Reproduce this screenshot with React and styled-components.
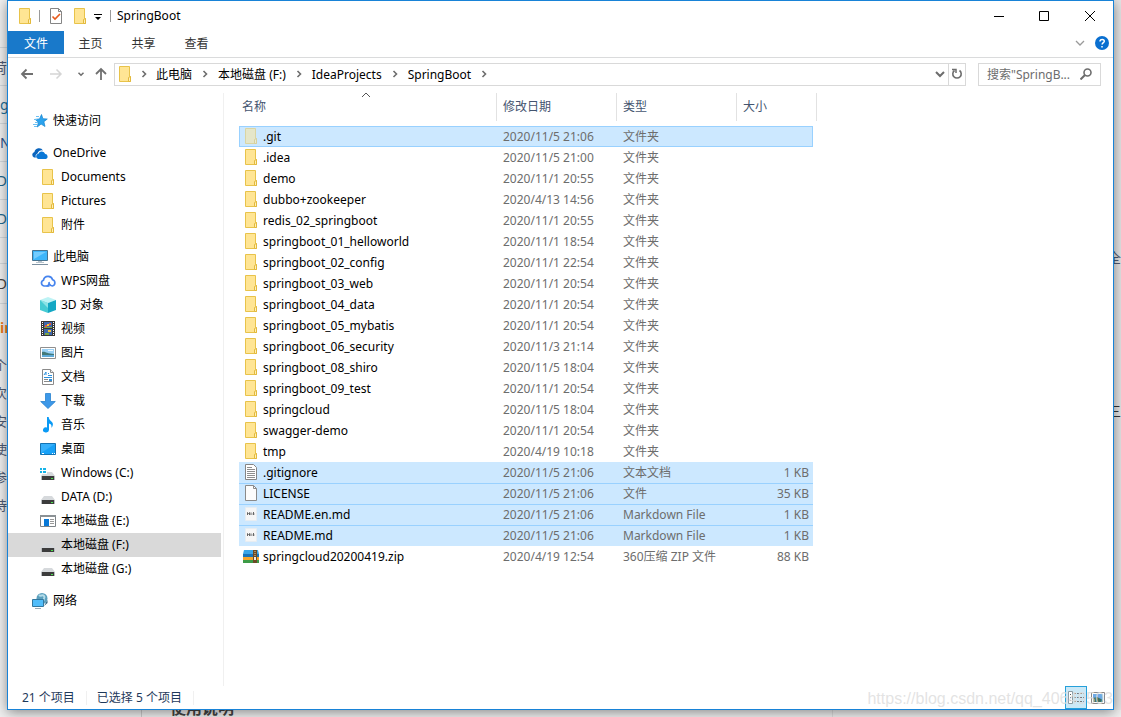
import React, { useState } from "react";
import styled, { createGlobalStyle } from "styled-components";

const GlobalStyle = createGlobalStyle`
  * {
    box-sizing: border-box;
  }

  body {
    margin: 0;
    font-family: "Noto Sans", "Noto Sans CJK SC", sans-serif;
    font-size: 12px;
    color: #000;
  }

  button, input {
    font: inherit;
    color: inherit;
    border: 0;
    padding: 0;
    background: none;
  }

  svg {
    display: block;
    flex: none;
  }
`;

const Desktop = styled.div`
  display: grid;
  grid-template-columns: 7px minmax(0, 1fr) 7px;
  grid-template-rows: minmax(0, 1fr) 7px;
  height: 100vh;
  overflow: hidden;
  background: #f4f4f4;
`;

const SideStrip = styled.div`
  display: flex;
  flex-direction: column;
  overflow: hidden;
  padding-top: 9px;
  background: ${props => props.$side === "right" ? "#e6e6e6" : "#f2f2f2"};
`;

const StripRow = styled.div`
  display: flex;
  flex: none;
  align-items: center;
  justify-content: ${props => props.$start ? "flex-start" : "flex-end"};
  height: ${props => props.$height}px;
  overflow: hidden;
  border-top: 1px solid ${props => props.$line ? "#d5dade" : "transparent"};
  color: ${props => props.$color || "#4f5b73"};
  font-size: ${props => props.$size || 14}px;
  font-weight: ${props => props.$bold ? 700 : 400};
  white-space: nowrap;
`;

const BottomStrip = styled.div`
  grid-column: 1 / -1;
  display: flex;
  align-items: flex-end;
  overflow: hidden;
  padding-left: 141px;
  background: #efefef;
`;

const PageHeading = styled.div`
  height: 7px;
  padding-left: 28px;
  border-left: 1px solid #ccc;
  border-right: 1px solid #ddd;
  flex: 0 0 692px;
  display: flex;
  align-items: flex-end;
  font-size: 16px;
  font-weight: 700;
  color: #444;
  line-height: 18px;
`;

const Window = styled.main`
  position: relative;
  display: flex;
  flex-direction: column;
  border: 1px solid #1883d7;
  background: #fff;
  box-shadow: 0 2px 12px rgba(0, 0, 0, 0.45);
`;

const TitleBar = styled.header`
  display: flex;
  align-items: center;
  flex: none;
  height: 30px;
  padding-left: 9px;
`;

const QuickAccess = styled.div`
  display: flex;
  align-items: center;
  gap: 8px;
`;

const Separator = styled.span`
  width: 1px;
  height: 12px;
  background: #9a9a9a;
`;

const Title = styled.h1`
  flex: 1;
  margin: 0 0 0 6px;
  padding-bottom: 2px;
  font-size: 12px;
  font-weight: 400;
`;

const IconButton = styled.button`
  display: flex;
  align-items: center;
  justify-content: center;
  flex: none;
  width: ${props => props.$width || 16}px;
  height: ${props => props.$height || 20}px;
`;

const Ribbon = styled.nav`
  display: flex;
  align-items: center;
  flex: none;
  height: 27px;
  padding-right: 3px;
  padding-bottom: 3px;
  border-bottom: 1px solid #dadbdc;
`;

const Tab = styled.button`
  width: ${props => props.$active ? 56 : 53}px;
  height: 23px;
  background: ${props => props.$active ? "#1979ca" : "transparent"};
  color: ${props => props.$active ? "#fff" : "#333"};
`;

const Spacer = styled.span`
  flex: 1;
`;

const AddressRow = styled.div`
  display: flex;
  align-items: center;
  flex: none;
  height: 33px;
  padding: 0 12px 1px 0;
`;

const Arrows = styled.div`
  display: flex;
  align-items: center;
  width: 106px;
  padding-left: 8px;
`;

const AddressBox = styled.div`
  display: flex;
  align-items: center;
  flex: 1;
  min-width: 0;
  height: 23px;
  padding-left: 2px;
  border: 1px solid #d9d9d9;
`;

const Crumbs = styled.div`
  display: flex;
  align-items: center;
  flex: 1;
  min-width: 0;
`;

const Refresh = styled(IconButton)`
  border-left: 1px solid #d9d9d9;
`;

const Search = styled.label`
  display: flex;
  align-items: center;
  flex: none;
  width: 123px;
  height: 23px;
  margin-left: 12px;
  padding: 0 8px;
  border: 1px solid #d9d9d9;
  color: #6d6d6d;
`;

const SearchInput = styled.input`
  flex: 1;
  min-width: 0;
  outline: 0;

  &::placeholder {
    color: #6d6d6d;
    opacity: 1;
  }
`;

const Body = styled.div`
  display: flex;
  flex: 1;
  min-height: 0;
  padding-top: 1px;
`;

const Sidebar = styled.nav`
  flex: none;
  width: 216px;
  padding: 8px 2px 0 0;
  margin-top: 1px;
  border-right: 1px solid #f0f0f0;
`;

const Group = styled.div`
  padding-top: 8px;
`;

const NavItem = styled.a`
  display: flex;
  align-items: center;
  gap: 5px;
  height: 24px;
  padding-left: ${props => props.$nested ? 32 : 24}px;
  background: ${props => props.$active ? "#d9d9d9" : "transparent"};
  color: #000;
  text-decoration: none;
  white-space: nowrap;
`;

const NavLabel = styled.span`
  padding-bottom: 2px;
`;

const Files = styled.section`
  flex: 1;
  min-width: 0;
  overflow: hidden;
  padding: 1px 0 0 15px;
`;

const Table = styled.table`
  width: 578px;
  table-layout: fixed;
  border-collapse: separate;
  border-spacing: 0;
`;

const HeadCell = styled.th`
  height: 28px;
  padding: 0 0 0 ${props => props.$first ? 3 : 6}px;
  border-right: 1px solid #e2e2e2;
  color: #44546f;
  font-weight: 400;
  text-align: left;
`;

const HeadLabel = styled.div`
  display: flex;
  align-items: center;
  height: 28px;
  padding-bottom: 2px;
`;

const SortMark = styled.span`
  position: absolute;
  top: 88px;
  left: 352px;
`;

const HeadGap = styled.td`
  height: 5px;
  padding: 0;
`;

const Cell = styled.td`
  height: 21px;
  padding: 0 4px 0 6px;
  border-top: ${props => props.$ruled ? "1px solid #99d1ff" : "0"};
  background: ${props => props.$selected ? "#cce8ff" : "transparent"};
  color: ${props => props.$name ? "#000" : "#6d6d6d"};
  text-align: ${props => props.$right ? "right" : "left"};
  line-height: 20px;
  white-space: nowrap;

  ${props => props.$focused && `
    box-shadow: inset 0 1px #99d1ff, inset 0 -1px #99d1ff
      ${props.$name ? ", inset 1px 0 #99d1ff" : ""}
      ${props.$right ? ", inset -1px 0 #99d1ff" : ""};
  `}
`;

const FileName = styled.div`
  display: flex;
  align-items: center;
  gap: 4px;
  height: 20px;
  margin-left: -2px;

  svg {
    margin-bottom: 2px;
  }
`;

const StatusBar = styled.footer`
  display: flex;
  align-items: center;
  flex: none;
  height: 23px;
  padding: 0 4px 0 14px;
  color: #1e395b;
`;

const StatusText = styled.span`
  padding-right: 11px;
  margin-right: 10px;
  border-right: 1px solid #f0f0f0;
  line-height: 14px;
`;

const ViewButton = styled(IconButton)`
  border: 1px solid ${props => props.$active ? "#26a0da" : "transparent"};
  background: ${props => props.$active ? "#cbe8f6" : "transparent"};
`;

const Watermark = styled.div`
  position: absolute;
  right: 0;
  bottom: 0;
  font-family: "Liberation Sans", sans-serif;
  font-size: 16px;
  line-height: 20px;
  color: rgba(220, 220, 220, 0.8);
  pointer-events: none;
`;

function Icon({ children, width = 16, height = 16 }) {
  return (
    <svg width={width} height={height} viewBox={`0 0 ${width} ${height}`} aria-hidden="true">
      {children}
    </svg>
  );
}

function Chevron({ dir = "right", color = "#6d6d6d", thick = 1.6, size = 3 }) {
  const turns = { right: 0, down: 90, left: 180, up: 270 };
  return (
    <Icon width={12} height={12}>
      <path
        d={`M${6 - size / 2} ${6 - size}l${size} ${size}l-${size} ${size}`}
        transform={`rotate(${turns[dir]} 6 6)`}
        fill="none"
        stroke={color}
        strokeWidth={thick}
      />
    </Icon>
  );
}

function FolderShape({ faded }) {
  return (
    <g opacity={faded ? 0.5 : 1}>
      <path d="M2.5.5h10v10h1v5h-11z" fill="#ffe594" stroke="#e8c34a" />
      <path d="M11.5 15.5v-4l2-1v5z" fill="#fff0b8" stroke="#e3b93c" />
    </g>
  );
}

function DriveShape() {
  return (
    <g>
      <path d="M4 7h8l3 4H1z" fill="#d6d9dc" />
      <path d="M1 11h14v4H1z" fill="#b9bdc0" />
      <path d="M2 11h12v4H2z" fill="#3c3c3c" />
      <path d="M11 13h2v1h-2z" fill="#4be04b" />
    </g>
  );
}

const shapes = {
  folder: <FolderShape />,
  hidden: <FolderShape faded />,
  star: (
    <g>
      <path d="M9.5 1.5l1.4 4.2 4.4.3-3.4 2.7 1.1 4.8-3.9-2.4L5.2 14l1.2-4.8L3.2 6.4l4.3-.5z" fill="#2ba3ee" stroke="#1684ce" strokeWidth=".7" />
      <path d="M4 3.5h3M2 6.5h3M3 9.5h3M1 11.5h4M2 13.5h3" stroke="#6cc0f3" strokeWidth="1" />
    </g>
  ),
  onedrive: (
    <g>
      <path d="M2 12.5a3 3 0 0 1 .4-5.6A4.7 4.7 0 0 1 11 5.5 4.2 4.2 0 0 0 5.5 8.5 3 3 0 0 0 4 12.5z" fill="#0a64bd" />
      <path d="M6.2 14a2.7 2.7 0 0 1 .2-5.3A3.7 3.7 0 0 1 13.2 9a2.6 2.6 0 0 1 .8 5z" fill="#0a78d7" />
    </g>
  ),
  pc: (
    <g>
      <path d="M.5 1.5h15v10H.5z" fill="#3db5fa" stroke="#46728f" />
      <path d="M2 3h12L2 10z" fill="#74cdff" />
      <path d="M6 12h4v1H6zM4 13h8v1H4z" fill="#b7c3cc" />
      <path d="M0 15.5h16" stroke="#7c90a0" />
    </g>
  ),
  cloud: (
    <g fill="none" stroke="#4684ee" strokeWidth="1.7">
      <path d="M9.5 13H4a3 3 0 0 1-.5-5.8A4.7 4.7 0 0 1 12.6 6.800a3.200 3.200 0 0 1-.3 6.200c-1.600 0-2.100-.8-3.300-2.500" />
      <path d="M6.500 13c2 0 3-2.500 2.500-4" />
    </g>
  ),
  cube: (
    <g>
      <path d="M8 0l8 3-8 3-8-3z" fill="#bdf3f5" />
      <path d="M0 3l8 3v10l-8-3z" fill="#46cbd3" />
      <path d="M16 3L8 6v10l8-3z" fill="#13a7c4" />
      <path d="M0 3l8 3v5z" fill="#8be3e5" />
    </g>
  ),
  video: (
    <g>
      <path d="M1 0h14v15H1z" fill="#373737" />
      <path d="M2.5 1v14M13.5 1v14" stroke="#fff" strokeWidth="1" strokeDasharray="1 1" />
      <path d="M4 1h8v6H4zM4 8h8v6H4z" fill="#3d68ad" />
      <path d="M5 4h2v2H5zM9 2h2v2H9z" fill="#e45737" />
      <path d="M4 6h8v1H4zM5 12h4v2H5z" fill="#7da743" />
      <path d="M7 3h2v2H7zM8 9h3v2H8z" fill="#f5c43b" />
    </g>
  ),
  picture: (
    <g>
      <path d="M.5 2.5h15v11H.5z" fill="#fff" stroke="#8f8f8f" />
      <path d="M2 4h12v8H2z" fill="#9ad1f6" />
      <path d="M2 7c3-1 5 2 12 2v3H2z" fill="#42797a" />
      <path d="M2 10h12v2H2z" fill="#5eaad8" />
      <path d="M8 5h5v1H8z" fill="#eef8ff" />
    </g>
  ),
  document: (
    <g>
      <path d="M2.5.5h8l3 3v12h-11z" fill="#fff" stroke="#8a8a8a" />
      <path d="M10.5.5v3h3" fill="#eee" stroke="#8a8a8a" />
      <path d="M6 3l-2 3M6 3v3M8 4.5h1M8 6.5h4M4 8.5h8" stroke="#2d91dd" />
      <path d="M4 10.5h4M4 12.5h8" stroke="#8a8a8a" />
      <path d="M9 10h3v2H9z" fill="#2d91dd" />
    </g>
  ),
  download: <path d="M5.5.5h5v8h4.8L8 15.5.7 8.5h4.8z" fill="#3d98e8" stroke="#2782cf" strokeWidth=".8" />,
  music: (
    <path d="M7 0h1.7c0 4 4.5 4 4.2 7.5-.1 1.5-.8 2.5-1.6 3.3.8-2.9-.7-4-2.3-4.4V13a3 2.6 0 1 1-2-2.6z" fill="#0a9af5" />
  ),
  desktop: (
    <g>
      <path d="M.5 2.5h15v11H.5z" fill="#17a1f7" stroke="#1373b4" />
      <path d="M1 3h14L1 12z" fill="#36b0fb" />
      <path d="M2 12.5h2M12 12.5h1M14 12.5h1" stroke="#fff" />
    </g>
  ),
  windows: (
    <g>
      <DriveShape />
      <path d="M0 2h7v7H0z" fill="#fff" />
      <path d="M0 3h2v2H0zM3 3h3v2H3zM0 6h2v2H0zM3 6h3v2H3z" fill="#16b3e8" />
    </g>
  ),
  drive: <DriveShape />,
  app: (
    <g>
      <path d="M.5 2.5h15v11H.5z" fill="#fff" stroke="#7d8387" />
      <path d="M0 2h16v2H0z" fill="#8b9195" />
      <path d="M4 6h5v7H4z" fill="#0878d7" />
      <path d="M10 6.5h4M10 8.5h4M10 10.5h4" stroke="#999" />
    </g>
  ),
  network: (
    <g>
      <circle cx="10" cy="5.5" r="5.5" fill="#5a9fbd" />
      <path d="M7 2c2 2 3-1 5 1s-2 3 0 5" fill="none" stroke="#b4dce9" strokeWidth="2" />
      <path d="M12 13l3.500-6v3z" fill="#286080" />
      <path d="M.5 6.5h11v7H.5z" fill="#51bdfa" stroke="#33789f" />
      <path d="M3 15.5h6" stroke="#9aabb5" />
    </g>
  ),
  text: (
    <g>
      <path d="M2.5.5h8l3 3v12h-11z" fill="#fff" stroke="#858585" />
      <path d="M4 3.5h5M4 5.5h8M4 7.5h8M4 9.5h8M4 11.5h8M4 13.5h8" stroke="#8e8e8e" />
    </g>
  ),
  blank: (
    <g>
      <path d="M2.5.5h8l3 3v12h-11z" fill="#fcfcfc" stroke="#8a8a8a" />
      <path d="M10.5.5v3h3" fill="none" stroke="#8a8a8a" />
    </g>
  ),
  markdown: (
    <g>
      <path d="M2.5 1.5h11v13h-11z" fill="#f6f6f6" stroke="#e7edf2" />
      <path d="M4.5 9V6.5l1 1 1-1V9M8 6.5V9M10.5 6v3M9.5 8h2" stroke="#666" fill="none" />
    </g>
  ),
  zip: (
    <g>
      <path d="M1 2h14l1 4H0z" fill="#3aa5e8" />
      <path d="M0 6h16v3H0z" fill="#1974ba" />
      <path d="M0 9h16v3H0z" fill="#f6a52b" />
      <path d="M0 12h16v3H0z" fill="#3d9b47" />
      <path d="M10 2h4v13h-4z" fill="#6c4a27" />
      <path d="M12 3v6" stroke="#e8c993" strokeDasharray="1 1" />
      <path d="M11 9h2v3h-2z" fill="#eee" />
    </g>
  ),
  check: (
    <g>
      <path d="M2.5.5h8l3 3v12h-11z" fill="#fff" stroke="#858585" />
      <path d="M10.5.5v3h3" fill="none" stroke="#858585" />
      <path d="M4.5 8.5L7 11l5-5" fill="none" stroke="#e85b1c" strokeWidth="1.6" />
    </g>
  ),
};

const groups = [
  [{ label: "快速访问", icon: "star" }],
  [
    { label: "OneDrive", icon: "onedrive" },
    { label: "Documents", icon: "folder", nested: true },
    { label: "Pictures", icon: "folder", nested: true },
    { label: "附件", icon: "folder", nested: true },
  ],
  [
    { label: "此电脑", icon: "pc" },
    { label: "WPS网盘", icon: "cloud", nested: true },
    { label: "3D 对象", icon: "cube", nested: true },
    { label: "视频", icon: "video", nested: true },
    { label: "图片", icon: "picture", nested: true },
    { label: "文档", icon: "document", nested: true },
    { label: "下载", icon: "download", nested: true },
    { label: "音乐", icon: "music", nested: true },
    { label: "桌面", icon: "desktop", nested: true },
    { label: "Windows (C:)", icon: "windows", nested: true },
    { label: "DATA (D:)", icon: "drive", nested: true },
    { label: "本地磁盘 (E:)", icon: "app", nested: true },
    { label: "本地磁盘 (F:)", icon: "drive", nested: true, active: true },
    { label: "本地磁盘 (G:)", icon: "drive", nested: true },
  ],
  [{ label: "网络", icon: "network" }],
];

const files = [
  [".git", "2020/11/5 21:06", "文件夹", "", "hidden"],
  [".idea", "2020/11/5 21:00", "文件夹", "", "folder"],
  ["demo", "2020/11/1 20:55", "文件夹", "", "folder"],
  ["dubbo+zookeeper", "2020/4/13 14:56", "文件夹", "", "folder"],
  ["redis_02_springboot", "2020/11/1 20:55", "文件夹", "", "folder"],
  ["springboot_01_helloworld", "2020/11/1 18:54", "文件夹", "", "folder"],
  ["springboot_02_config", "2020/11/1 22:54", "文件夹", "", "folder"],
  ["springboot_03_web", "2020/11/1 20:54", "文件夹", "", "folder"],
  ["springboot_04_data", "2020/11/1 20:54", "文件夹", "", "folder"],
  ["springboot_05_mybatis", "2020/11/1 20:54", "文件夹", "", "folder"],
  ["springboot_06_security", "2020/11/3 21:14", "文件夹", "", "folder"],
  ["springboot_08_shiro", "2020/11/5 18:04", "文件夹", "", "folder"],
  ["springboot_09_test", "2020/11/1 20:54", "文件夹", "", "folder"],
  ["springcloud", "2020/11/5 18:04", "文件夹", "", "folder"],
  ["swagger-demo", "2020/11/1 20:54", "文件夹", "", "folder"],
  ["tmp", "2020/4/19 10:18", "文件夹", "", "folder"],
  [".gitignore", "2020/11/5 21:06", "文本文档", "1 KB", "text"],
  ["LICENSE", "2020/11/5 21:06", "文件", "35 KB", "blank"],
  ["README.en.md", "2020/11/5 21:06", "Markdown File", "1 KB", "markdown"],
  ["README.md", "2020/11/5 21:06", "Markdown File", "1 KB", "markdown"],
  ["springcloud20200419.zip", "2020/4/19 12:54", "360压缩 ZIP 文件", "88 KB", "zip"],
];

const selected = [".git", ".gitignore", "LICENSE", "README.en.md", "README.md"];

// slivers of the page that stays open behind the window
const leftRows = [
  { height: 38, text: "" },
  { height: 38, text: "荷", line: true },
  { height: 38, text: "gn", line: true, color: "#1f7199", start: true },
  { height: 38, text: "N", line: true, color: "#2b5590", start: true },
  { height: 38, text: "D", line: true, color: "#1f6a91" },
  { height: 38, text: "D", line: true, color: "#1f6a91" },
  { height: 26, text: "", line: true },
  { height: 40, text: "D", line: true, color: "#444" },
  { height: 60, text: "in", line: true, color: "#ee7d1e", bold: true, start: true },
  { height: 28, text: "个", size: 13 },
  { height: 28, text: "次", size: 13 },
  { height: 28, text: "安", size: 13 },
  { height: 28, text: "使", size: 13 },
  { height: 28, text: "参", size: 13 },
  { height: 28, text: "待", size: 13 },
].map(row => row.text === "in" ? { ...row, height: 47 } : row);

const rightRows = [
  { height: 235, text: "" },
  { height: 24, text: "全" },
  { height: 129, text: "" },
  { height: 26, text: "三", size: 13, color: "#333" },
];

function PageStrip({ side, rows }) {
  return (
    <SideStrip $side={side}>
      {rows.map((row, i) => (
        <StripRow
          key={i}
          $start={row.start}
          $height={row.height}
          $line={row.line}
          $color={row.color}
          $size={row.size}
          $bold={row.bold}
        >
          {row.text}
        </StripRow>
      ))}
    </SideStrip>
  );
}

function Toolbar() {
  return (
    <>
      <TitleBar>
        <QuickAccess>
          <Icon width={14}>{shapes.folder}</Icon>
          <Separator />
          <Icon>{shapes.check}</Icon>
          <Icon width={14}>{shapes.folder}</Icon>
          <Icon width={8} height={10}>
            <path d="M0 3h8v1H0zM1 6h6L4 9z" fill="#000" />
          </Icon>
          <Separator />
        </QuickAccess>
        <Title>SpringBoot</Title>
        <IconButton aria-label="最小化" $width={45} $height={30}>
          <Icon width={10} height={10}><path d="M0 5.5h10" stroke="#000" /></Icon>
        </IconButton>
        <IconButton aria-label="最大化" $width={46} $height={30}>
          <Icon width={10} height={10}><path d="M.5.5h9v9h-9z" stroke="#000" fill="none" /></Icon>
        </IconButton>
        <IconButton aria-label="关闭" $width={46} $height={30}>
          <Icon width={10} height={10}><path d="M0 0l10 10M10 0L0 10" stroke="#000" /></Icon>
        </IconButton>
      </TitleBar>
      <Ribbon>
        <Tab $active>文件</Tab>
        <Tab>主页</Tab>
        <Tab>共享</Tab>
        <Tab>查看</Tab>
        <Spacer />
        <IconButton aria-label="展开功能区" $width={28}>
          <Chevron dir="down" color="#9a9a9a" thick={1.3} size={4} />
        </IconButton>
        <IconButton aria-label="帮助">
          <Icon>
            <circle cx="8" cy="8" r="7" fill="#0a6fd0" />
            <path d="M6 6.5c0-3 4.3-2.5 4.3-.3 0 1.5-2.2 1.5-2.2 3.3M8 11v1.5" stroke="#fff" strokeWidth="1.5" fill="none" />
          </Icon>
        </IconButton>
      </Ribbon>
    </>
  );
}

function AddressBar() {
  const path = ["此电脑", "本地磁盘 (F:)", "IdeaProjects", "SpringBoot"];
  return (
    <AddressRow>
      <Arrows>
        <IconButton aria-label="后退" $width={22}>
          <Icon width={14} height={12}><path d="M13 6H2M6.5 1.5L2 6l4.5 4.5" stroke="#707070" strokeWidth="1.8" fill="none" /></Icon>
        </IconButton>
        <IconButton aria-label="前进" $width={36}>
          <Icon width={14} height={12}><path d="M1 6h11M7.5 1.5L12 6l-4.5 4.5" stroke="#d5d5d5" strokeWidth="1.5" fill="none" /></Icon>
        </IconButton>
        <IconButton aria-label="最近位置" $width={14}>
          <Chevron dir="down" thick={1.5} size={2.5} />
        </IconButton>
        <IconButton aria-label="上移" $width={26}>
          <Icon width={12} height={14}><path d="M6 13V2M1 7l5-5 5 5" stroke="#707070" strokeWidth="1.8" fill="none" /></Icon>
        </IconButton>
      </Arrows>
      <AddressBox>
        <Icon width={14}>{shapes.folder}</Icon>
        <Crumbs>
          <IconButton aria-label="位置" $width={25}><Chevron /></IconButton>
          {path.map(name => (
            <React.Fragment key={name}>
              <button>{name}</button>
              <IconButton aria-label={name} $width={26}><Chevron /></IconButton>
            </React.Fragment>
          ))}
        </Crumbs>
        <IconButton aria-label="以前的位置"><Chevron dir="down" thick={2} size={4} /></IconButton>
        <Refresh aria-label="刷新" $width={17} $height={21}>
          <Icon width={12} height={12}>
            <path d="M8.5 2.5a4.2 4.2 0 1 1-5 0" stroke="#6d6d6d" strokeWidth="1.6" fill="none" />
            <path d="M1 1.5h4V5" stroke="#6d6d6d" strokeWidth="1.5" fill="none" />
          </Icon>
        </Refresh>
      </AddressBox>
      <Search>
        <SearchInput type="text" aria-label="搜索" placeholder={'搜索"SpringB...'} />
        <Icon width={12} height={12}>
          <circle cx="7.5" cy="4.5" r="3.5" stroke="#6d6d6d" strokeWidth="1.6" fill="none" />
          <path d="M5 7L.5 11.5" stroke="#6d6d6d" strokeWidth="2" />
        </Icon>
      </Search>
    </AddressRow>
  );
}

function FileTable() {
  const [ picked, setPicked ] = useState(selected);
  return (
    <Table>
      <colgroup>
        <col width="258" />
        <col width="120" />
        <col width="120" />
        <col width="76" />
        <col width="4" />
      </colgroup>
      <thead>
        <tr>
          <HeadCell $first><HeadLabel>名称</HeadLabel></HeadCell>
          <HeadCell><HeadLabel>修改日期</HeadLabel></HeadCell>
          <HeadCell><HeadLabel>类型</HeadLabel></HeadCell>
          <HeadCell colSpan={2}><HeadLabel>大小</HeadLabel></HeadCell>
        </tr>
      </thead>
      <tbody>
        <tr><HeadGap colSpan={5} /></tr>
        {files.map(([ name, date, type, size, icon ], i) => {
          const on = picked.includes(name);
          const look = {
            $selected: on,
            $focused: picked[0] === name,
            $ruled: on && i > 0 && picked.includes(files[i - 1][0]),
          };
          return (
            <tr key={name} onClick={() => setPicked([name])}>
              <Cell {...look} $name>
                <FileName>
                  <Icon>{shapes[icon]}</Icon>
                  {name}
                </FileName>
              </Cell>
              <Cell {...look}>{date}</Cell>
              <Cell {...look}>{type}</Cell>
              <Cell {...look} $right>{size}</Cell>
            </tr>
          );
        })}
      </tbody>
    </Table>
  );
}

function App() {
  return (
    <>
      <GlobalStyle />
      <Desktop>
        <PageStrip side="left" rows={leftRows} />
        <Window>
          <Toolbar />
          <AddressBar />
          <Body>
            <Sidebar>
              {groups.map((items, i) => (
                <Group key={i}>
                  {items.map(item => (
                    <NavItem key={item.label} href="#" $nested={item.nested} $active={item.active}>
                      <Icon>{shapes[item.icon]}</Icon>
                      <NavLabel>{item.label}</NavLabel>
                    </NavItem>
                  ))}
                </Group>
              ))}
            </Sidebar>
            <Files>
              <SortMark><Chevron dir="up" color="#555" thick={1} size={4} /></SortMark>
              <FileTable />
            </Files>
          </Body>
          <StatusBar>
            <StatusText>21 个项目</StatusText>
            <StatusText>已选择 5 个项目</StatusText>
            <Spacer />
            <ViewButton aria-label="详细信息" $active $width={22} $height={23}>
              <Icon>
                <path d="M.5 1.5h4v12h-4z" fill="#fff" stroke="#8d9ba3" />
                <path d="M2 4.5h1M2 7.5h1M2 10.5h1" stroke="#555" />
                <path d="M6 3.5h10M6 7.5h10M6 11.5h10" stroke="#777" strokeDasharray="2 1" />
              </Icon>
            </ViewButton>
            <ViewButton aria-label="大图标" $width={22} $height={23}>
              <Icon width={14} height={12}>
                <path d="M.5.5h13v11H.5z" fill="#fff" stroke="#888" />
                <path d="M2 2h10v8H2z" fill="#6fa9e6" />
                <path d="M2 6l4-1 6 3v2H2z" fill="#3d6f62" />
              </Icon>
            </ViewButton>
          </StatusBar>
          <Watermark>https://blog.csdn.net/qq_40649503</Watermark>
        </Window>
        <PageStrip side="right" rows={rightRows} />
        <BottomStrip>
          <PageHeading>使用说明</PageHeading>
        </BottomStrip>
      </Desktop>
    </>
  );
}

export default App;
